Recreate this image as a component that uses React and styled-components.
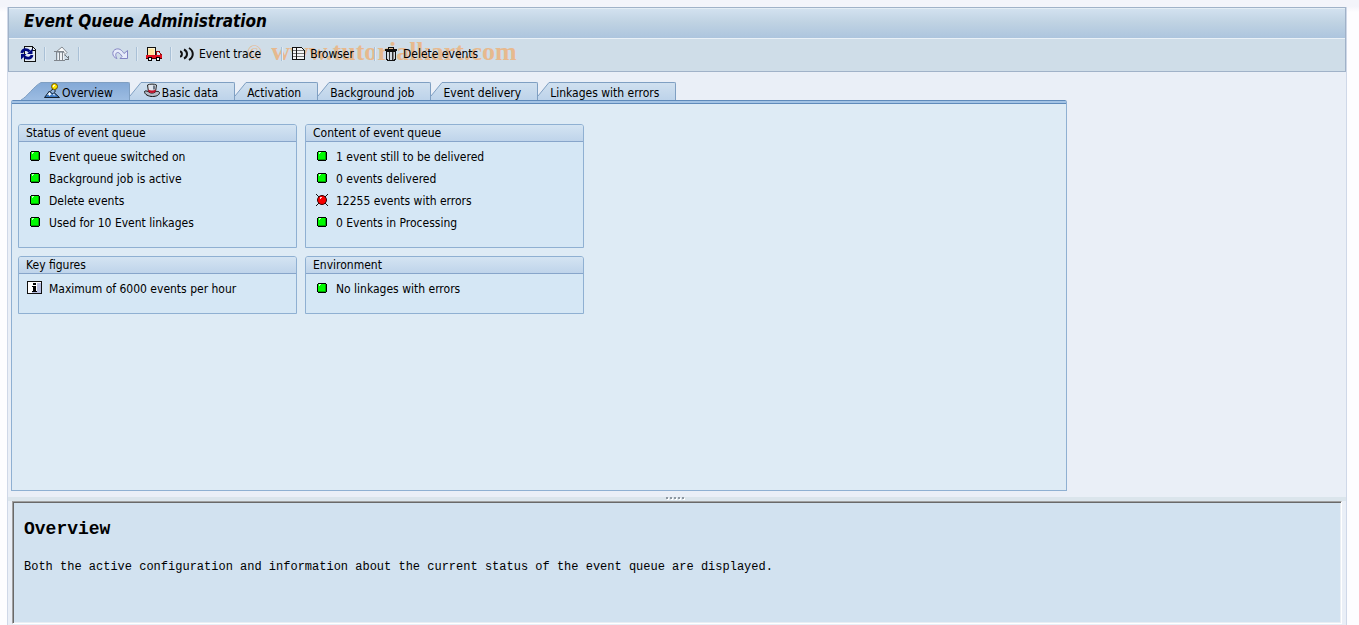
import React, { useState } from "react";
import styled, { createGlobalStyle } from "styled-components";

const GlobalStyle = createGlobalStyle`
  * { box-sizing: border-box; }
  body {
    margin: 0;
    background: #fdfdff;
    color: #000;
    font: 12px/16px "DejaVu Sans Condensed", "DejaVu Sans", sans-serif;
  }
  button { font: inherit; color: inherit; border: 0; background: none; padding: 0; margin: 0; }
  h1, h2, p, ul { margin: 0; padding: 0; font-weight: normal; }
`;

const Page = styled.div`
  min-height: 100vh;
  display: flex;
  flex-direction: column;
  padding: 0 12px 0 7px;
  background: linear-gradient(#f3f4fa 0 6px, #fdfdff 12px);
`;

const Window = styled.main`
  flex: 1;
  display: flex;
  flex-direction: column;
  margin-top: 7px;
  border: solid #cfd8e8;
  border-width: 0 1px;
  background: #eaeff7;
`;

const Header = styled.header`
  position: relative;
  border: 1px solid #a0b2c8;
  background: #cfdde8;
`;

const Title = styled.h1`
  height: 31px;
  padding: 2px 15px;
  border-top: 1px solid #e4edf5;
  border-bottom: 1px solid #eaf1f7;
  background: linear-gradient(#d2e1ef, #c0d3e3 45%, #adc5de);
  font-size: 17px;
  line-height: 20px;
  font-weight: bold;
  font-style: italic;
`;

const Toolbar = styled.div`
  position: relative;
  z-index: 1;
  display: flex;
  align-items: center;
  height: 32px;
  padding: 0 11px 2px;
`;

const ToolButton = styled.button`
  display: flex;
  align-items: center;
  gap: 3px;
  min-width: 16px;
  height: 20px;
  margin-left: ${(p) => p.$before || 0}px;
  white-space: nowrap;
`;

const Separator = styled.span`
  width: 2px;
  height: 14px;
  margin: 0 8px;
  margin-left: ${(p) => p.$before || 8}px;
  border-left: 1px solid #a9c0d6;
  border-right: 1px solid #dfe9f2;
`;

const Watermark = styled.span`
  position: absolute;
  left: 238px;
  top: 29px;
  font: bold 26px/30px "Liberation Serif", serif;
  color: #f7a254;
  opacity: 0.6;
  white-space: pre;
  pointer-events: none;
`;

const Sign = styled.span`
  font-weight: normal;
  font-size: 20px;
  margin-right: 9px;
`;

const Tabs = styled.div`
  display: flex;
  margin: 10px 0 0 13px;
`;

const TabButton = styled.button`
  display: flex;
  height: 18px;
  white-space: nowrap;
`;

const TabEdge = styled.svg`
  display: block;
  flex: none;
`;

const TabBody = styled.span`
  display: flex;
  align-items: center;
  gap: 2px;
  height: 18px;
  padding: 3px 16px 0 ${(p) => (p.$icon ? 3 : 1)}px;
  border-top: 1px solid #7f9fc2;
  border-right: 1px solid #7f9fc2;
  border-radius: 0 2px 0 0;
  background: ${(p) => (p.$active ? "linear-gradient(#84a9d6, #9cbce2)" : "linear-gradient(#d0e0ef, #bdd3ea)")};
  svg { margin-bottom: 4px; }
`;

const Panel = styled.section`
  flex: 1;
  max-width: 1056px;
  margin: 0 4px 0 3px;
  border: 1px solid #8fb0d2;
  border-top: 0;
  border-radius: 2px 2px 0 0;
  background: linear-gradient(#5f8aba 0 1px, #a3c3e5 1px 3px, #5f8aba 3px 4px, #deebf5 4px);
  padding: 24px 6px 12px;
`;

const Groups = styled.div`
  display: grid;
  grid-template-columns: repeat(2, minmax(0, 279px));
  gap: 8px;
`;

const Group = styled.section`
  border: 1px solid #8fb0d2;
  border-radius: 3px 3px 0 0;
  background: #d5e7f5;
`;

const GroupTitle = styled.h2`
  height: 17px;
  padding-left: 7px;
  border-bottom: 1px solid #87a5ca;
  border-radius: 2px 2px 0 0;
  background: linear-gradient(#d4e4f2, #bfd4ea);
  font-size: 12px;
  line-height: 16px;
`;

const StatusList = styled.ul`
  list-style: none;
  padding: 4px 8px 13px;
`;

const StatusRow = styled.li`
  display: flex;
  align-items: center;
  gap: 6px;
  height: 22px;
  svg { margin-bottom: 2px; }
`;

const Splitter = styled.div`
  display: flex;
  justify-content: center;
  gap: 2px;
  height: 4px;
  margin-top: 6px;
  padding-right: 4px;
  background: #dbe5ec;
`;

const Grip = styled.i`
  width: 2px;
  height: 2px;
  background: #8d97a1;
  box-shadow: 1px 1px #fff;
`;

const HelpPane = styled.section`
  min-height: 123px;
  margin: 0 4px 1px;
  padding: 17px 11px;
  border: 1px solid;
  border-color: #a0a0a0 #fff #fff #a0a0a0;
  box-shadow: inset 1px 1px #696969, inset -1px -1px #e9eef4;
  background: #d2e2f0;
  font-family: "Liberation Mono", monospace;
  font-size: 12px;
`;

const HelpTitle = styled.h2`
  margin-bottom: 20px;
  font-size: 18px;
  line-height: 20px;
  font-weight: bold;
`;

const Glyph = styled.svg`
  display: block;
  flex: none;
`;

function Icon({ children }) {
  return (
    <Glyph width="16" height="16" viewBox="0 0 16 16" shapeRendering="crispEdges" fill="none" aria-hidden="true">
      {children}
    </Glyph>
  );
}

const RefreshIcon = () => (
  <Icon>
    <path d="M4.500 .5h8l3 3v11.500h-11z" fill="#e4ecf3" stroke="#111" />
    <path d="M12 1v3h3" stroke="#111" />
    <g shapeRendering="auto" stroke="#000a80" strokeWidth="2.800">
      <path d="M1.800 7C2.500 3 7 2.500 9.500 5.500M12 9C11.500 12.500 7 13.300 4.500 10.500" />
      <path d="M12.500 2.500v5.500H7zM1 13.500V8h5.500z" fill="#000a80" stroke="none" />
    </g>
  </Icon>
);

const BuildingIcon = () => (
  <Icon>
    <g shapeRendering="auto">
      <path d="M2 6 8 1l5 5.500-3 3V6z" fill="#f8f9fa" stroke="#858b92" />
      <path d="M4 7h6v7H4z" fill="#f0f2f5" />
    </g>
    <path d="M0 5.500h10M2.500 6v8M5.500 6v8M8.500 6v8M0 14.500h11" stroke="#80868d" />
    <path d="M11 9.500h1M12 10.500h1M13 11.500h1M14.500 10v4M11 13.500h4" stroke="#70767d" />
  </Icon>
);

const RedoIcon = () => (
  <Icon>
    <path
      shapeRendering="auto"
      d="M5 12.500C-.5 11 -.5 4 4.500 3c3.500-.6 5.500 1.500 7.500 4.500l3.500-3v8H8l2-2C8.500 8 7 6.300 5.500 6.500 3.500 6.800 3 9.500 5 12.500z"
      fill="#e7ebfa"
      stroke="#8484c4"
    />
  </Icon>
);

const TruckIcon = () => (
  <Icon>
    <path d="M1.500 1.500h8v8h-8z" fill="#ffe5a0" stroke="#111" />
    <path d="M2 2.500h6.500v6" stroke="#fff3d0" />
    <path d="M10 5.500h3l2 3v2h-5z" fill="#d8e8f5" stroke="#9a1010" />
    <path d="M0 9h16v3H0z" fill="#e01020" />
    <path d="M0 12.500h16" stroke="#500" />
    <path d="M2 11h4v4H2zM10 11h4v4h-4z" fill="#000" />
    <path d="M3 12h2v2H3zM11 12h2v2h-2z" fill="#fff" />
  </Icon>
);

const TraceIcon = () => (
  <Icon>
    <g shapeRendering="auto" stroke="#111" strokeWidth="2">
      <path d="M0 5.500c2.500 0 2.500 5 0 5M4 3.500c4 2 4 7 0 9M9 2c5 3 5 9 0 12" />
    </g>
  </Icon>
);

const SheetIcon = () => (
  <Icon>
    <path d="M1.500 1.500h9l3 3v9h-12z" fill="#f4f5f7" stroke="#111" />
    <path d="M2 4.500h11M2 7.500h11M2 10.500h11" stroke="#777" />
    <path d="M5.500 1v13" stroke="#111" />
  </Icon>
);

const TrashIcon = () => (
  <Icon>
    <path d="M5 1.500h4M1.500 3.500h11v1h-11z" stroke="#111" fill="#ddd" />
    <path d="M4.500 1v2M9.500 1v2" stroke="#111" />
    <path d="M2.500 5.500h9v8h-1v1h-7v-1h-1z" fill="#d4dbe2" stroke="#111" />
    <path d="M5.500 6v8M8.500 6v8" stroke="#333" />
    <path d="M9.500 6v8" stroke="#888" />
  </Icon>
);

const OverviewIcon = () => (
  <Icon>
    <g shapeRendering="auto">
      <path d="M.5 14.500 5.500 8l3 3 1.500-1.500 5.500 5z" fill="#3c78c0" stroke="#15202c" />
      <path d="M5.500 9 3 12l1.500-.5 1 1.500 1.500-1.500 1 .5zM10 10.500l-1.500 2 1.500-.5 1.500 1z" fill="#fff" />
      <path d="M9 6 6.500 8M11 6.500V9" stroke="#15202c" />
      <circle cx="10.500" cy="3.500" r="3" fill="#ffe400" stroke="#6b5200" />
    </g>
    <path d="M9 2h2v1h-1v1H9z" fill="#fffbd0" />
  </Icon>
);

const HatIcon = () => (
  <Icon>
    <g shapeRendering="auto">
      <path d="M.5 8.500c0 3 4 5 8 5s7-1.500 7-4c-1-1.500-2-1-3-1H4c-1-.5-3-1-3.500 0z" fill="#b4bcc8" stroke="#111" />
      <path d="M3.500 2c2-1.200 7-1.200 9 0l-1 7c-2 1.500-5 1.500-7 0z" fill="#dfe4ec" stroke="#222" />
      <path d="M4.200 6.500c2 1.200 5.500 1.200 7.600 0L11.500 9c-2 1.400-5 1.400-7 0z" fill="#c3142c" />
      <path d="M10 2.500v4" stroke="#6d7785" strokeWidth="2" />
    </g>
  </Icon>
);

const OkIcon = () => (
  <Icon>
    <path d="M4 3h8v1h1v8h-1v1H4v-1H3V4h1z" fill="#000" />
    <path d="M4 4h8v8H4z" fill="#00a800" />
    <path d="M4 4h7v7H4z" fill="#00fb00" />
    <path d="M5 4h2v1H6v1H5z" fill="#b8ffb8" />
  </Icon>
);

const ErrorIcon = () => (
  <Icon>
    <path d="m2 2 12 12M14 2 2 14" stroke="#111" />
    <circle cx="8" cy="8" r="4.500" fill="#f80000" stroke="#300" shapeRendering="auto" />
    <path d="M6 5h2v1H7v1H6z" fill="#ffd0d0" />
  </Icon>
);

const InfoIcon = () => (
  <Icon>
    <path d="M.5 1.500h14v12H.5z" fill="#fff" stroke="#111" />
    <path d="M10 3h4v10H5v-1h5z" fill="#b9c0e0" />
    <path d="M6 3h3v2H6zM5 6h4v5h1v1H5v-1h1V7H5z" fill="#000" />
  </Icon>
);

const statusIcons = { ok: OkIcon, error: ErrorIcon, info: InfoIcon };

const tabs = [
  { label: "Overview", icon: OverviewIcon },
  { label: "Basic data", icon: HatIcon },
  { label: "Activation" },
  { label: "Background job" },
  { label: "Event delivery" },
  { label: "Linkages with errors" },
];

const groups = [
  {
    title: "Status of event queue",
    rows: [
      ["ok", "Event queue switched on"],
      ["ok", "Background job is active"],
      ["ok", "Delete events"],
      ["ok", "Used for 10 Event linkages"],
    ],
  },
  {
    title: "Content of event queue",
    rows: [
      ["ok", "1 event still to be delivered"],
      ["ok", "0 events delivered"],
      ["error", "12255 events with errors"],
      ["ok", "0 Events in Processing"],
    ],
  },
  { title: "Key figures", rows: [["info", "Maximum of 6000 events per hour"]] },
  { title: "Environment", rows: [["ok", "No linkages with errors"]] },
];

function Tab({ label, icon: TabIcon, active, first, onSelect }) {
  const w = first ? 20 : 11;
  const slope = first ? "M0 18C6 15 13 4 20 .5" : "M0 14 11 .5";
  const id = first ? "edge-first" : `edge-${label.replace(/ /g, "-")}`;
  return (
    <TabButton role="tab" aria-selected={active} onClick={onSelect}>
      <TabEdge width={w} height="18" aria-hidden="true">
        <defs>
          <linearGradient id={id} x2="0" y2="1">
            <stop stopColor={active ? "#84a9d6" : "#d0e0ef"} />
            <stop offset="1" stopColor={active ? "#9cbce2" : "#bdd3ea"} />
          </linearGradient>
        </defs>
        <path d={`${slope}V18H0z`} fill={`url(#${id})`} />
        <path d={slope} fill="none" stroke="#7f9fc2" />
      </TabEdge>
      <TabBody $active={active} $icon={Boolean(TabIcon)}>
        {TabIcon && <TabIcon />}
        {label}
      </TabBody>
    </TabButton>
  );
}

export default function App() {
  const [current, setCurrent] = useState("Overview");
  return (
    <Page>
      <GlobalStyle />
      <Window>
        <Header>
          <Title>Event Queue Administration</Title>
          <Toolbar role="toolbar" aria-label="Application toolbar">
            <ToolButton aria-label="Refresh"><RefreshIcon /></ToolButton>
            <Separator />
            <ToolButton aria-label="Organization"><BuildingIcon /></ToolButton>
            <Separator />
            <ToolButton aria-label="Redo" $before={24}><RedoIcon /></ToolButton>
            <Separator />
            <ToolButton aria-label="Transport"><TruckIcon /></ToolButton>
            <Separator />
            <ToolButton><TraceIcon />Event trace</ToolButton>
            <Separator $before={20} />
            <ToolButton><SheetIcon />Browser</ToolButton>
            <Separator $before={20} />
            <ToolButton><TrashIcon />Delete events</ToolButton>
          </Toolbar>
          <Watermark><Sign>©</Sign>www.tutorialkart.com</Watermark>
        </Header>
        <Tabs role="tablist">
          {tabs.map((t, i) => (
            <Tab key={t.label} {...t} first={i === 0} active={t.label === current} onSelect={() => setCurrent(t.label)} />
          ))}
        </Tabs>
        <Panel role="tabpanel">
          <Groups>
            {groups.map((g) => (
              <Group key={g.title}>
                <GroupTitle>{g.title}</GroupTitle>
                <StatusList>
                  {g.rows.map(([state, text]) => {
                    const StateIcon = statusIcons[state];
                    return (
                      <StatusRow key={text}><StateIcon />{text}</StatusRow>
                    );
                  })}
                </StatusList>
              </Group>
            ))}
          </Groups>
        </Panel>
        <Splitter role="separator">
          <Grip /><Grip /><Grip /><Grip /><Grip />
        </Splitter>
        <HelpPane>
          <HelpTitle>Overview</HelpTitle>
          <p>Both the active configuration and information about the current status of the event queue are displayed.</p>
        </HelpPane>
      </Window>
    </Page>
  );
}
